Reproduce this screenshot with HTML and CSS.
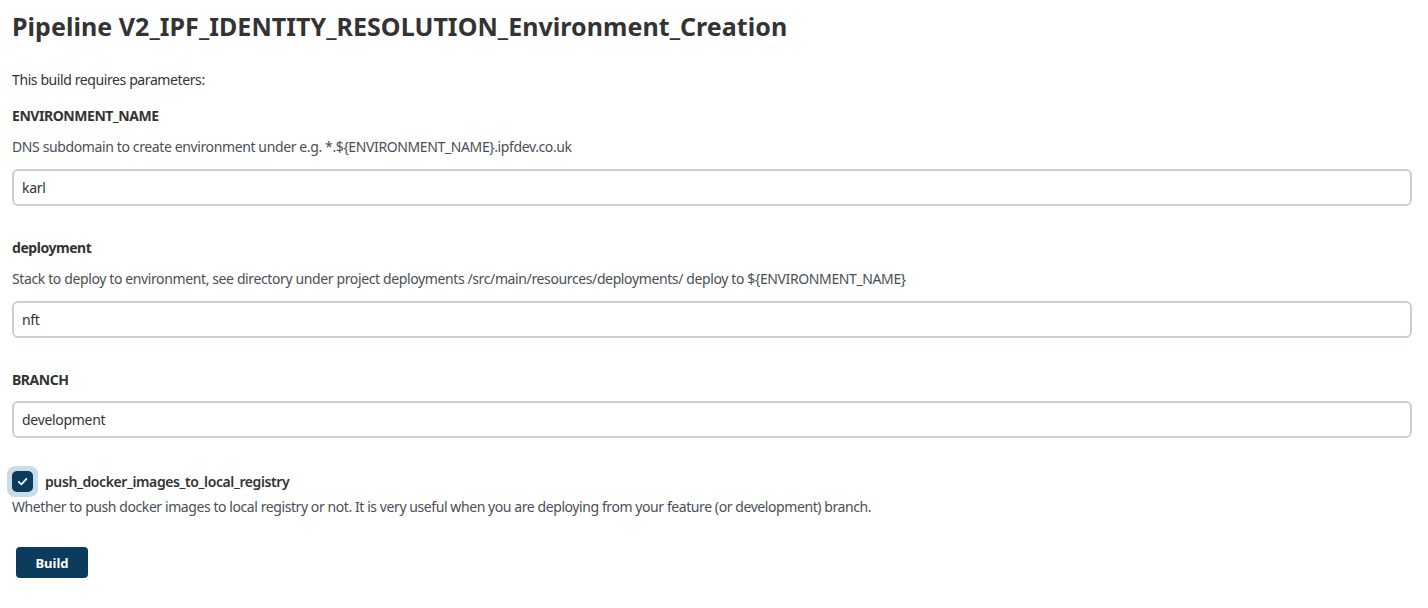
FILE: index.html
```html
<!DOCTYPE html>
<html>
<head>
<meta charset="utf-8">
<link rel="stylesheet" href="styles.css">
</head>
<body>
<main class="page">
  <h1 class="title">Pipeline V2_IPF_IDENTITY_RESOLUTION_Environment_Creation</h1>
  <p class="intro">This build requires parameters:</p>
  <form class="params">
    <div class="param">
      <div class="param-name">ENVIRONMENT_NAME</div>
      <div class="param-desc">DNS subdomain to create environment under e.g. *.${ENVIRONMENT_NAME}.ipfdev.co.uk</div>
      <input class="text-input" type="text" value="karl">
    </div>
    <div class="param">
      <div class="param-name">deployment</div>
      <div class="param-desc">Stack to deploy to environment, see directory under project deployments /src/main/resources/deployments/ deploy to ${ENVIRONMENT_NAME}</div>
      <input class="text-input" type="text" value="nft">
    </div>
    <div class="param">
      <div class="param-name branch-name">BRANCH</div>
      <input class="text-input" type="text" value="development">
    </div>
    <div class="param check-param">
      <label class="check-row">
        <span class="check-halo"><span class="check-box"><svg viewBox="0 0 12 12" width="13" height="13"><path d="M2.5 6.3 L5 8.6 L9.6 3.6" fill="none" stroke="#fff" stroke-width="1.6" stroke-linecap="round" stroke-linejoin="round"/></svg></span></span>
        <span class="check-label">push_docker_images_to_local_registry</span>
      </label>
      <div class="check-desc">Whether to push docker images to local registry or not. It is very useful when you are deploying from your feature (or development) branch.</div>
    </div>
    <div class="actions">
      <button type="button" class="build-btn">Build</button>
    </div>
  </form>
</main>
</body>
</html>
```
FILE: styles.css
```css
html, body {
  margin: 0;
  padding: 0;
  background: #fff;
}
body {
  font-family: "Noto Sans", "Open Sans", sans-serif;
  color: #333;
  font-size: 14px;
}
.page {
  padding: 10px 16px 0 12px;
}
.title {
  margin: 0;
  font-size: 25px;
  line-height: 32px;
  font-weight: 700;
  color: #333;
  letter-spacing: 0.05px;
}
.intro {
  margin: 28px 0 0;
  line-height: 20px;
  letter-spacing: -0.4px;
}
.params {
  display: flex;
  flex-direction: column;
}
.param {
  display: flex;
  flex-direction: column;
}
.param + .param {
  margin-top: 32px;
}
.param:first-child {
  margin-top: 16px;
}
.param-name {
  font-weight: 700;
  line-height: 20px;
  letter-spacing: -0.45px;
}
.param-desc {
  margin-top: 11px;
  line-height: 20px;
  color: #4a4f55;
  letter-spacing: -0.38px;
}
.text-input {
  margin-top: 12px;
  box-sizing: border-box;
  height: 37px;
  width: 100%;
  border: 2px solid #c8d0d4;
  border-radius: 6px;
  padding: 0 8px;
  font: inherit;
  color: #333;
  letter-spacing: -0.3px;
  background: #fff;
  outline: none;
}
.branch-name + .text-input {
  margin-top: 11px;
}
.check-param {
  margin-top: 28px !important;
}
.check-row {
  display: flex;
  align-items: center;
  gap: 7px;
}
.check-halo {
  box-sizing: border-box;
  width: 31px;
  height: 31px;
  border-radius: 8px;
  background: #c9dce8;
  display: flex;
  align-items: center;
  justify-content: center;
  margin-left: -5px;
}
.check-box {
  width: 21px;
  height: 21px;
  border-radius: 5px;
  background: #0b3a5c;
  display: flex;
  align-items: center;
  justify-content: center;
}
.check-label {
  font-weight: 600;
  line-height: 20px;
  letter-spacing: -0.4px;
}
.check-desc {
  margin-top: 0;
  line-height: 20px;
  color: #4a4f55;
  letter-spacing: -0.42px;
}
.actions {
  margin-top: 30px;
  padding-left: 4px;
}
.build-btn {
  width: 72px;
  height: 31px;
  border: none;
  border-radius: 4px;
  background: #0b3c5d;
  color: #fff;
  font: inherit;
  font-size: 13px;
  font-weight: 700;
  cursor: pointer;
}
```
